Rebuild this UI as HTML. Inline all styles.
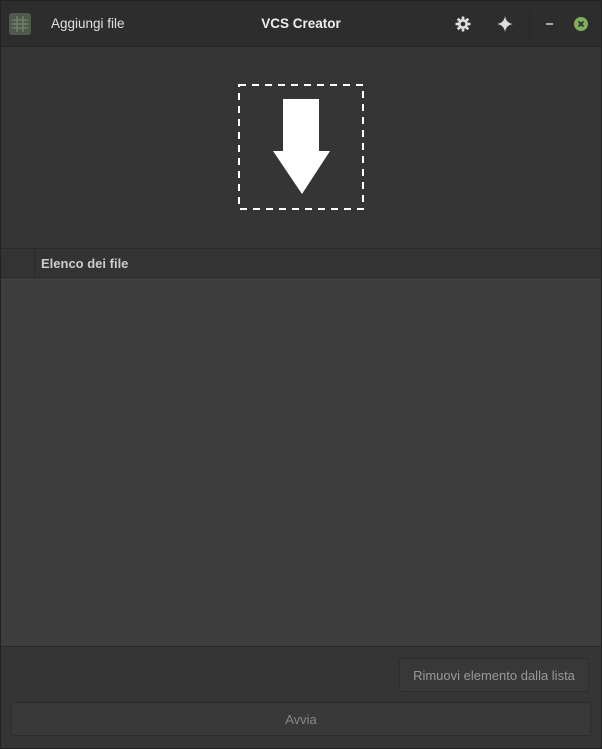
<!DOCTYPE html>
<html><head><style>
body{margin:0;width:602px;height:749px;background:#353535;font-family:"Liberation Sans",sans-serif;position:relative;overflow:hidden}
div{position:absolute;box-sizing:border-box}
</style></head><body>
<div style="left:0;top:0;width:602px;height:47px;background:#2d2d2d;border-bottom:1px solid #262626"></div>
<div style="top:13px;left:9px;width:22px;height:22px;border-radius:3px;background:#4f5a4c"></div>
<svg style="position:absolute;left:12px;top:16px" width="16" height="16"><g stroke="#6f7f68" stroke-width="1.5"><line x1="0" y1="4" x2="16" y2="4"/><line x1="0" y1="8" x2="16" y2="8"/><line x1="0" y1="12" x2="16" y2="12"/><line x1="5" y1="0" x2="5" y2="16"/><line x1="11" y1="0" x2="11" y2="16"/></g></svg>
<div style="left:51px;top:16px;color:#e0e0e0;font-size:13.5px">Aggiungi file</div>
<div style="left:0;width:602px;top:16px;text-align:center;color:#eee;font-size:13.5px;font-weight:bold">VCS Creator</div>
<svg style="position:absolute;left:455px;top:16px" width="16" height="16" viewBox="0 0 16 16"><g stroke="#ddd" stroke-width="2.6"><line x1="8" y1="0.5" x2="8" y2="15.5"/><line x1="0.5" y1="8" x2="15.5" y2="8"/><line x1="2.7" y1="2.7" x2="13.3" y2="13.3"/><line x1="13.3" y1="2.7" x2="2.7" y2="13.3"/></g><circle cx="8" cy="8" r="5" fill="#ddd"/><circle cx="8" cy="8" r="2.3" fill="#2d2d2d"/></svg>
<svg style="position:absolute;left:497px;top:16px" width="16" height="16"><path d="M8 0 Q9 7 16 8 Q9 9 8 16 Q7 9 0 8 Q7 7 8 0Z" fill="#ddd"/></svg>
<div style="left:529px;top:10px;width:1px;height:30px;background:#262626"></div>
<div style="left:546px;top:23px;width:7px;height:2px;background:#aaa"></div>
<svg style="position:absolute;left:574px;top:17px" width="14" height="14"><circle cx="7" cy="7" r="7" fill="#7fae5c"/><path d="M4.5 4.5L9.5 9.5M9.5 4.5L4.5 9.5" stroke="#2d2d2d" stroke-width="1.6"/></svg>
<svg style="position:absolute;left:238px;top:84px" width="126" height="126"><rect x="1" y="1" width="124" height="124" fill="none" stroke="#fff" stroke-width="2" stroke-dasharray="7 6"/><path d="M45 15H81V67H92L64 110L35 67H45Z" fill="#fff"/></svg>
<div style="left:1px;top:248px;width:600px;height:30px;background:#333;border-top:1px solid #2a2a2a;border-bottom:1px solid #2a2a2a"></div>
<div style="left:34px;top:249px;width:1px;height:28px;background:#2a2a2a"></div>
<div style="left:41px;top:256px;color:#ccc;font-size:13px;font-weight:bold">Elenco dei file</div>
<div style="left:1px;top:278px;width:600px;height:369px;background:#3e3e3e;border-bottom:1px solid #2a2a2a"></div>
<div style="left:399px;top:658px;width:190px;height:34px;border:1px solid #2c2c2c;border-radius:3px;background:#383838;color:#999;font-size:13px;text-align:center;line-height:33px">Rimuovi elemento dalla lista</div>
<div style="left:11px;top:702px;width:580px;height:34px;border:1px solid #2c2c2c;border-radius:3px;background:#393939;color:#888;font-size:13px;text-align:center;line-height:33px">Avvia</div>
<div style="left:0;top:0;width:602px;height:749px;border:1px solid #222"></div>
</body></html>
